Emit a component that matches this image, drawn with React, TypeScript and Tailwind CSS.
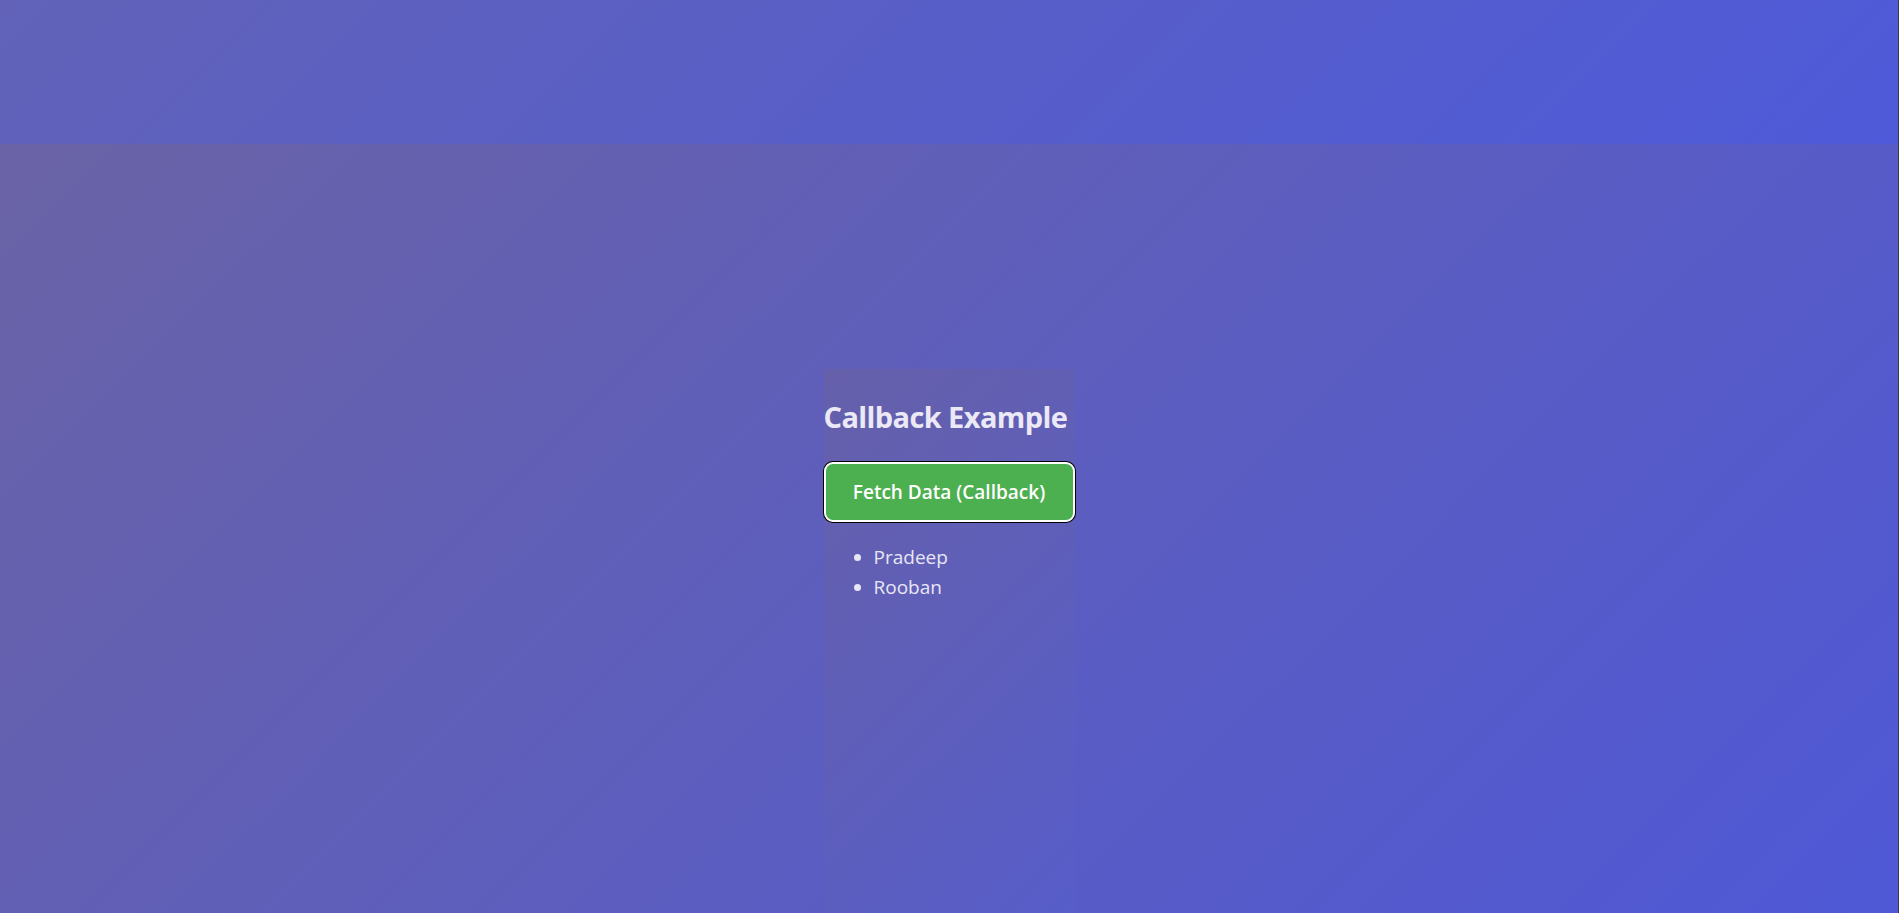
const people = ['Pradeep', 'Rooban'];

export default function App() {
  return (
    <div className="flex min-h-[913px] w-full font-['Open_Sans','Noto_Sans',sans-serif]">
      <div className="flex flex-1 flex-col">
        {/* top band */}
        <header className="h-[144px] bg-[linear-gradient(135deg,#6162b8,#4e5ad9)]" />

        {/* page body */}
        <main className="flex flex-1 justify-center bg-[linear-gradient(135deg,#6a63a6,#4f58d6)] pt-[225px]">
          <div className="flex w-[251px] flex-col bg-[linear-gradient(135deg,#6660aa,#575dc9)]">
            <h1 className="mt-[28px] whitespace-nowrap text-[29px] leading-[40px] font-bold tracking-[-0.6px] text-[#ebe9f6]">
              Callback Example
            </h1>
            <button
              type="button"
              className="mt-[25px] h-[60px] w-full rounded-[9px] border-2 border-white bg-[#4caf50] text-[19px] font-semibold text-white ring-1 ring-black"
            >
              Fetch Data (Callback)
            </button>
            <ul className="mt-[20px] list-disc pl-[50px] text-[19px] leading-[30px] text-[#e8e6f5]">
              {people.map((name) => (
                <li key={name}>{name}</li>
              ))}
            </ul>
          </div>
        </main>
      </div>
      <div className="w-px bg-[#3b3b3b]" />
    </div>
  );
}
